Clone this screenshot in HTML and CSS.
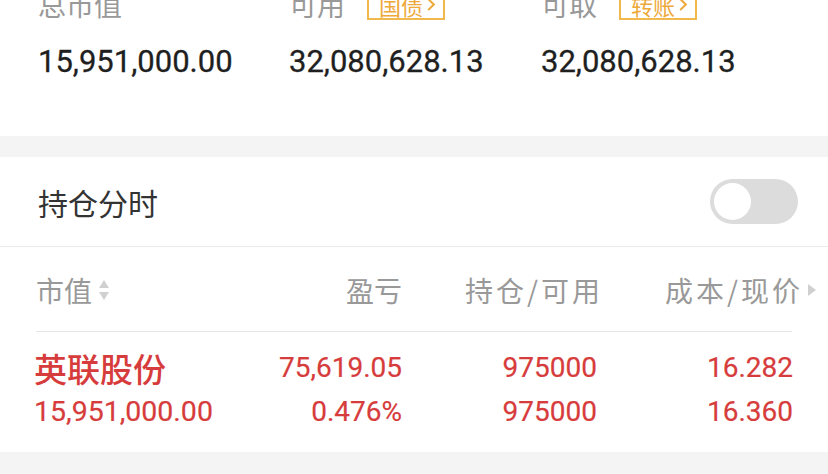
FILE: index.html
```html
<!DOCTYPE html>
<html lang="zh-CN">
<head>
<meta charset="utf-8">
<link rel="stylesheet" href="styles.css">
</head>
<body>
<section class="summary">
  <div class="col">
    <div class="label-row"><span class="label">总市值</span></div>
    <div class="value">15,951,000.00</div>
  </div>
  <div class="col">
    <div class="label-row"><span class="label">可用</span><span class="badge">国债<svg class="chev" viewBox="0 0 10 16" width="10" height="15"><path d="M2 2 L8 8 L2 14" fill="none" stroke="currentColor" stroke-width="2.2"/></svg></span></div>
    <div class="value">32,080,628.13</div>
  </div>
  <div class="col">
    <div class="label-row"><span class="label">可取</span><span class="badge">转账<svg class="chev" viewBox="0 0 10 16" width="10" height="15"><path d="M2 2 L8 8 L2 14" fill="none" stroke="currentColor" stroke-width="2.2"/></svg></span></div>
    <div class="value">32,080,628.13</div>
  </div>
</section>
<div class="gap"></div>
<section class="holdings">
  <div class="switch-row">
    <span class="switch-title">持仓分时</span>
    <span class="toggle"><span class="knob"></span></span>
  </div>
  <div class="table-head">
    <div class="th th-first">市值<span class="sort"><span class="up"></span><span class="down"></span></span></div>
    <div class="th">盈亏</div>
    <div class="th th-wide">持仓/可用</div>
    <div class="th th-wide th-last">成本/现价<span class="more"></span></div>
  </div>
  <div class="table-row">
    <div class="cell name">英联股份</div>
    <div class="cell num">75,619.05</div>
    <div class="cell num c3">975000</div>
    <div class="cell num c4">16.282</div>
    <div class="cell num first">15,951,000.00</div>
    <div class="cell num">0.476%</div>
    <div class="cell num c3">975000</div>
    <div class="cell num c4">16.360</div>
  </div>
</section>
<div class="gap bottom"></div>
</body>
</html>
```

FILE: styles.css
```css
* { box-sizing: border-box; }
html, body { margin: 0; padding: 0; }
body {
  width: 828px;
  height: 474px;
  overflow: hidden;
  background: #f4f4f4;
  font-family: "Noto Sans CJK SC", "Noto Sans", sans-serif;
}
.summary {
  background: #fff;
  display: flex;
  padding-left: 38px;
  margin-top: -10px;
  height: 146px;
}
.col { width: 251px; }
.col:nth-child(2) { width: 252px; }
.label-row {
  display: flex;
  align-items: center;
  height: 28px;
}
.label {
  font-size: 28px;
  line-height: 28px;
  color: #999;
}
.badge {
  margin-left: 22px;
  display: inline-flex;
  align-items: center;
  height: 30px;
  margin-top: 1px;
  padding: 0 7px 0 10px;
  border: 2px solid #f1b84e;
  color: #eda93a;
  font-size: 22px;
  line-height: 1;
}
.chev { margin-left: 3px; }
.value {
  margin-top: 29px;
  font-family: Roboto, "Noto Sans", sans-serif;
  font-weight: 400;
  font-size: 31px;
  line-height: 30px;
  color: #1f1f1f;
  -webkit-text-stroke: 0.3px #1f1f1f;
}
.gap { height: 21px; background: #f4f4f4; }
.holdings { background: #fff; }
.switch-row {
  height: 90px;
  display: flex;
  align-items: center;
  justify-content: space-between;
  padding: 0 30px 0 38px;
  border-bottom: 1px solid #ececec;
}
.switch-title {
  font-size: 30px;
  color: #333;
}
.toggle {
  width: 88px;
  height: 45px;
  border-radius: 23px;
  background: #dcdcdc;
  padding: 4px;
  display: flex;
  align-items: center;
}
.knob {
  width: 37px;
  height: 37px;
  border-radius: 50%;
  background: #fff;
}
.table-head, .table-row {
  display: grid;
  grid-template-columns: 172px 196px 196px 196px;
  padding-left: 34px;
}
.table-head {
  height: 85px;
  align-items: center;
  position: relative;
}
.table-head::after {
  content: "";
  position: absolute;
  left: 36px;
  right: 36px;
  bottom: 0;
  height: 1px;
  background: #e6e6e6;
}
.th {
  font-size: 28px;
  color: #999;
  text-align: right;
  display: flex;
  justify-content: flex-end;
  align-items: center;
}
.th-first { justify-content: flex-start; padding-left: 2px; }
.th-wide { letter-spacing: 3px; margin-right: -5px; }
.th-last { margin-right: -22px; }
.sort {
  display: inline-flex;
  flex-direction: column;
  margin-left: 7px;
  gap: 4px;
}
.up, .down {
  width: 0; height: 0;
  border-left: 5px solid transparent;
  border-right: 5px solid transparent;
}
.up { border-bottom: 8px solid #d0d0d0; }
.down { border-top: 8px solid #d0d0d0; }
.more {
  width: 0; height: 0;
  border-top: 6.5px solid transparent;
  border-bottom: 6.5px solid transparent;
  border-left: 8px solid #d0d0d0;
  margin-left: 5px;
}
.table-row {
  padding-top: 14px;
  padding-bottom: 18px;
  grid-auto-rows: 44px;
  align-items: center;
  color: #d73c3c;
}
.cell.name {
  font-size: 33px;
  font-weight: 500;
  line-height: 44px;
}
.cell.num {
  font-family: Roboto, "Noto Sans", sans-serif;
  font-size: 28px;
  line-height: 44px;
  text-align: right;
  -webkit-text-stroke: 0.2px #d73c3c;
}
.cell.num.first { text-align: left; font-size: 28.5px; }
.cell.c3 { margin-right: 1px; }
.cell.c4 { margin-right: 1px; }
.gap.bottom { height: 40px; }
```
